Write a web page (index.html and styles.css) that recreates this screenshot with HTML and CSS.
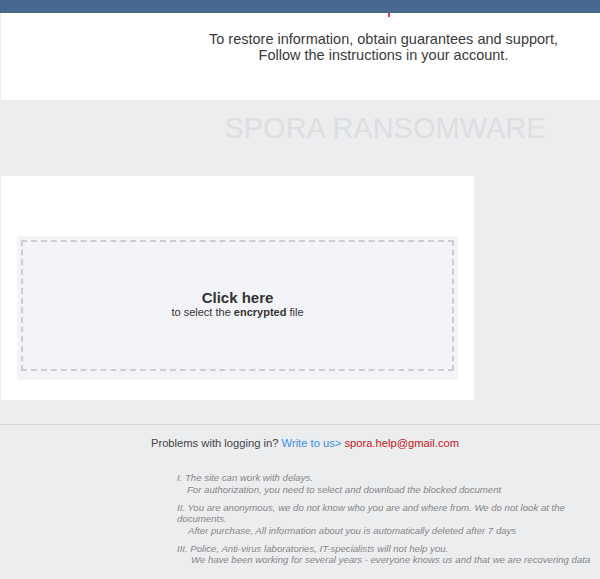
FILE: index.html
```html
<!DOCTYPE html>
<html lang="en">
<head>
    <meta charset="UTF-8">
    <meta name="viewport" content="width=device-width, initial-scale=1.0">
    <title>Spora</title>
    <link rel="stylesheet" href="styles.css">
</head>
<body>
    <div id="topbar"><span class="mark"></span></div>

    <div id="header">
        <p>To restore information, obtain guarantees and support,<br>Follow the instructions in your account.</p>
    </div>

    <div id="brand">SPORA RANSOMWARE</div>

    <div id="card">
        <div class="drop">
            <div class="drop-inner">
                <div class="title">Click here</div>
                <div class="sub">to select the <b>encrypted</b> file</div>
            </div>
        </div>
    </div>

    <div id="footer">
        <p class="help">Problems with logging in? <span class="blue">Write to us&gt;</span> <span class="red">spora.help@gmail.com</span></p>

        <div class="notes">
            <p>I. The site can work with delays.<br><span class="ind1">For authorization, you need to select and download the blocked document</span></p>
            <p>II. You are anonymous, we do not know who you are and where from. We do not look at the documents.<br><span class="ind2">After purchase, All information about you is automatically deleted after 7 days</span></p>
            <p>III. Police, Anti-virus laboratories, IT-specialists will not help you.<br><span class="ind3">We have been working for several years - everyone knows us and that we are recovering data</span></p>
        </div>
    </div>
</body>
</html>
```

FILE: styles.css
```css
body {
    margin: 0;
    background: #ecedef;
    font-family: "Liberation Sans", Arial, sans-serif;
    color: #333;
}

#topbar {
    height: 13px;
    background: #48688f;
    position: relative;
}

#topbar .mark {
    position: absolute;
    left: 388px;
    top: 13px;
    width: 2px;
    height: 4px;
    background: #e0394b;
}

#header {
    background: #fff;
    margin-left: 1px;
    height: 87px;
    padding-left: 166px;
    box-sizing: border-box;
    text-align: center;
}

#header p {
    margin: 0;
    padding-top: 18px;
    font-size: 14.5px;
    line-height: 16px;
    color: #3a3a3a;
}

#brand {
    height: 76px;
    box-sizing: border-box;
    padding: 12px 0 0 170px;
    text-align: center;
    font-size: 29px;
    color: #dcdee0;
}

#card {
    background: #fff;
    margin-left: 1px;
    width: 473px;
    height: 224px;
    box-sizing: border-box;
    padding: 60px 16px 0 16px;
}

.drop {
    background: #f3f4f7;
    height: 144px;
    padding: 4px;
    box-sizing: border-box;
}

.drop-inner {
    height: 131px;
    border: 2px dashed #cdcdcf;
    box-sizing: border-box;
    display: flex;
    flex-direction: column;
    align-items: center;
    justify-content: center;
    padding-bottom: 2px;
    color: #333;
}

.drop-inner .title {
    font-size: 15px;
    font-weight: bold;
    line-height: 16px;
}

.drop-inner .sub {
    font-size: 11px;
    line-height: 13px;
}

#footer {
    margin-top: 24px;
    border-top: 1px solid #d6d7d9;
}

.help {
    margin: 0;
    padding-top: 12px;
    text-align: center;
    font-size: 11.2px;
    color: #444;
    padding-left: 10px;
}

.help .blue {
    color: #3d8fe6;
}

.help .red {
    color: #c4161c;
}

.notes {
    padding: 23px 0 0 177px;
    font-size: 9.6px;
    font-style: italic;
    color: #868686;
    line-height: 11.5px;
}

.notes p {
    margin: 0 0 6.5px 0;
}

.ind1 {
    padding-left: 10px;
}

.ind2 {
    padding-left: 11px;
}

.ind3 {
    padding-left: 14px;
}
```
